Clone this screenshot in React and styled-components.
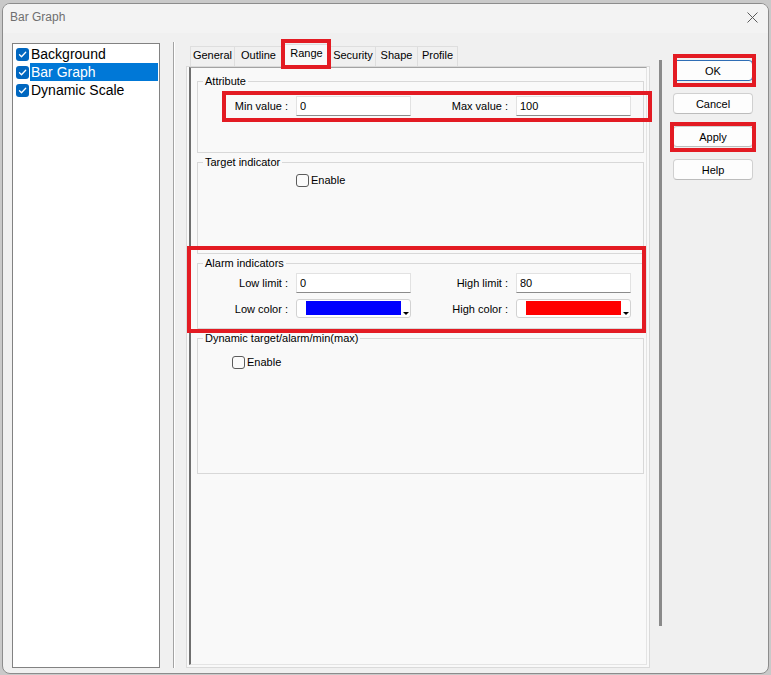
import React from "react";
import styled, { createGlobalStyle } from "styled-components";

const GlobalStyle = createGlobalStyle`
  html, body {
    margin: 0;
    padding: 0;
    background: #c9c9c9;
  }
  body {
    font-family: "Liberation Sans", Arial, sans-serif;
    color: #000;
  }
`;

const RED = "#e31b23";

const Dialog = styled.div`
  width: 767px;
  height: 671px;
  box-sizing: border-box;
  margin: 3px 0 0 2px;
  border: 1px solid #8c8c8c;
  border-radius: 8px;
  background: #f0f0f0;
  display: flex;
  flex-direction: column;
  overflow: hidden;
`;

const TitleBar = styled.div`
  height: 29px;
  flex: none;
  display: flex;
  align-items: flex-start;
  justify-content: space-between;
  padding: 6px 10px 0 7px;
  box-sizing: border-box;
  background: #f3f3f3;
`;

const Title = styled.span`
  font-size: 12px;
  line-height: 14px;
  color: #6f6f6f;
`;

const CloseIcon = styled.svg`
  width: 11px;
  height: 11px;
  margin-top: 2px;
`;

const Body = styled.div`
  flex: 1;
  display: flex;
  align-items: flex-start;
  padding: 10px 0 0 9px;
`;

/* object tree on the left */
const Tree = styled.div`
  width: 148px;
  height: 625px;
  box-sizing: border-box;
  border: 1px solid #828282;
  background: #fff;
  padding-top: 1px;
`;

const TreeItem = styled.div`
  display: flex;
  align-items: center;
  height: 18px;
`;

const TreeCheck = styled.span`
  width: 13px;
  height: 13px;
  margin: 0 1px 0 3px;
  border-radius: 3px;
  background: #0067c0;
  display: flex;
  align-items: center;
  justify-content: center;
  flex: none;
`;

const TreeLabel = styled.span`
  flex: 1;
  margin-right: 1px;
  padding-left: 1px;
  font-size: 14px;
  line-height: 18px;
  color: ${(p) => (p.$selected ? "#fff" : "#000")};
  background: ${(p) => (p.$selected ? "#0078d7" : "transparent")};
`;

const Divider = styled.div`
  width: 1px;
  height: 626px;
  margin: -1px 0 0 13px;
  background: #a3a3a3;
  box-shadow: 1px 0 0 #fff;
`;

/* property sheet */
const TabArea = styled.div`
  width: 464px;
  height: 624px;
  margin: 1px 0 0 12px;
  display: flex;
  flex-direction: column;
`;

const TabStrip = styled.div`
  height: 22px;
  flex: none;
  display: flex;
  align-items: flex-end;
  padding-left: 4px;
`;

const Tab = styled.div`
  position: relative;
  width: ${(p) => p.$w}px;
  height: ${(p) => (p.$active ? 23 : 20)}px;
  margin: 0 -1px ${(p) => (p.$active ? -1 : 0)}px 0;
  box-sizing: border-box;
  border: 1px solid #dedede;
  border-bottom: none;
  background: ${(p) => (p.$active ? "#f9f9f9" : "#f0f0f0")};
  z-index: ${(p) => (p.$active ? 2 : 1)};
  display: flex;
  align-items: center;
  justify-content: center;
  padding-bottom: ${(p) => (p.$active ? 5 : 3)}px;
  font-size: 11px;
  line-height: 13px;
`;

const TabPanel = styled.div`
  flex: 1;
  display: flex;
  border: 1px solid #dadada;
  background: #f9f9f9;
  padding: 0 2px 2px 2px;
`;

const ContentBox = styled.div`
  flex: 1;
  display: flex;
  flex-direction: column;
  gap: 2px;
  border-left: 2px solid #6f6f6f;
  border-top: 1px solid #a3a3a3;
  border-right: 1px solid #e4e4e4;
  border-bottom: 1px solid #e4e4e4;
  padding: 6px 2px 0 6px;
  background: #f9f9f9;
`;

const Group = styled.fieldset`
  margin: 0;
  min-width: 0;
  box-sizing: border-box;
  height: ${(p) => p.$h}px;
  border: 1px solid #d8d8d8;
  padding: ${(p) => p.$pt}px 0 0 0;
`;

const Caption = styled.legend`
  margin-left: 5px;
  padding: 0 2px;
  font-size: 11px;
  line-height: 14px;
`;

const FieldGrid = styled.div`
  display: grid;
  grid-template-columns: 90px 115px 89px 115px;
  column-gap: 8px;
  row-gap: 6px;
  align-items: center;
`;

const FieldLabel = styled.span`
  text-align: right;
  font-size: 11px;
  white-space: nowrap;
`;

const TextBox = styled.input`
  width: 115px;
  height: 20px;
  box-sizing: border-box;
  margin: 0;
  border: 1px solid #e2e2e2;
  border-bottom-color: #8b8b8b;
  background: #fff;
  padding: 0 0 0 3px;
  font-family: "Liberation Sans", Arial, sans-serif;
  font-size: 11px;
  color: #000;
  outline: none;
`;

const ColorBox = styled.div`
  width: 115px;
  height: 19px;
  box-sizing: border-box;
  display: flex;
  border: 1px solid #d2d2d2;
  border-radius: 3px;
  background: #fff;
  padding: 1px 0 2px 9px;
`;

const Swatch = styled.div`
  flex: 1;
  background: ${(p) => p.$color};
`;

const DropMark = styled.div`
  width: 9px;
  display: flex;
  align-items: flex-end;
  justify-content: center;

  &::before {
    content: "";
    border-left: 3px solid transparent;
    border-right: 3px solid transparent;
    border-top: 3px solid #000;
  }
`;

const CheckRow = styled.label`
  display: flex;
  align-items: center;
  gap: 2px;
  padding-left: ${(p) => p.$indent}px;
  font-size: 11px;
  line-height: 15px;
`;

const Box = styled.span`
  width: 13px;
  height: 13px;
  box-sizing: border-box;
  border: 1px solid #5c5c5c;
  border-radius: 3px;
  background: #fbfbfb;
`;

const ScrollLine = styled.div`
  width: 3px;
  height: 566px;
  margin: 17px 0 0 9px;
  background: #8a8a8a;
`;

const Buttons = styled.div`
  width: 80px;
  margin: 17px 0 0 11px;
  display: flex;
  flex-direction: column;
  gap: 12px;
`;

const Button = styled.button`
  width: 80px;
  height: 21px;
  box-sizing: border-box;
  margin: 0;
  padding: 0;
  border: 1px solid ${(p) => (p.$default ? "#2f6db5" : "#d0d0d0")};
  border-bottom-color: ${(p) => (p.$default ? "#2f6db5" : "#bcbcbc")};
  border-radius: 4px;
  background: #fdfdfd;
  font-family: "Liberation Sans", Arial, sans-serif;
  font-size: 11px;
  color: #000;
`;

/* red callout frame drawn over a control */
const Marked = styled.div`
  position: relative;

  &::after {
    content: "";
    position: absolute;
    top: ${(p) => p.$t}px;
    right: ${(p) => p.$r}px;
    bottom: ${(p) => p.$b}px;
    left: ${(p) => p.$l}px;
    border: 4px solid ${RED};
    pointer-events: none;
    z-index: 5;
  }
`;

const tree = [
  { name: "Background" },
  { name: "Bar Graph", selected: true },
  { name: "Dynamic Scale" },
];

const tabs = [
  { name: "General", w: 45 },
  { name: "Outline", w: 49 },
  { name: "Range", w: 49, active: true },
  { name: "Security", w: 46 },
  { name: "Shape", w: 43 },
  { name: "Profile", w: 41 },
];

const Check = () => (
  <svg width="9" height="9" viewBox="0 0 9 9">
    <path d="M1.5 4.8l2 2L7.7 2.3" fill="none" stroke="#fff" strokeWidth="1.3" strokeLinecap="round" strokeLinejoin="round" />
  </svg>
);

export default function App() {
  return (
    <>
      <GlobalStyle />
      <Dialog>
        <TitleBar>
          <Title>Bar Graph</Title>
          <CloseIcon viewBox="0 0 11 11">
            <path d="M0.5 0.5L10.5 10.5M10.5 0.5L0.5 10.5" stroke="#5a5a5a" strokeWidth="1" />
          </CloseIcon>
        </TitleBar>

        <Body>
          <Tree>
            {tree.map((t) => (
              <TreeItem key={t.name}>
                <TreeCheck>
                  <Check />
                </TreeCheck>
                <TreeLabel $selected={t.selected}>{t.name}</TreeLabel>
              </TreeItem>
            ))}
          </Tree>

          <Divider />

          <TabArea>
            <TabStrip>
              {tabs.map((t) =>
                t.active ? (
                  <Marked key={t.name} $t={-5} $r={-1} $b={-3} $l={-1}>
                    <Tab $w={t.w} $active>
                      {t.name}
                    </Tab>
                  </Marked>
                ) : (
                  <Tab key={t.name} $w={t.w}>
                    {t.name}
                  </Tab>
                )
              )}
            </TabStrip>

            <TabPanel>
              <ContentBox>
                <Group $h={79} $pt={8}>
                  <Caption>Attribute</Caption>
                  <Marked $t={-5} $r={-9} $b={-6} $l={24}>
                    <FieldGrid>
                      <FieldLabel>Min value :</FieldLabel>
                      <TextBox readOnly value="0" />
                      <FieldLabel>Max value :</FieldLabel>
                      <TextBox readOnly value="100" />
                    </FieldGrid>
                  </Marked>
                </Group>

                <Group $h={99} $pt={4}>
                  <Caption>Target indicator</Caption>
                  <CheckRow $indent={98}>
                    <Box />
                    Enable
                  </CheckRow>
                </Group>

                <Marked $t={-10} $r={-2} $b={-4} $l={-10}>
                  <Group $h={73} $pt={3}>
                    <Caption>Alarm indicators</Caption>
                    <FieldGrid>
                      <FieldLabel>Low limit :</FieldLabel>
                      <TextBox readOnly value="0" />
                      <FieldLabel>High limit :</FieldLabel>
                      <TextBox readOnly value="80" />
                      <FieldLabel>Low color :</FieldLabel>
                      <ColorBox>
                        <Swatch $color="#0000ff" />
                        <DropMark />
                      </ColorBox>
                      <FieldLabel>High color :</FieldLabel>
                      <ColorBox>
                        <Swatch $color="#ff0000" />
                        <DropMark />
                      </ColorBox>
                    </FieldGrid>
                  </Group>
                </Marked>

                <Group $h={143} $pt={10}>
                  <Caption>Dynamic target/alarm/min(max)</Caption>
                  <CheckRow $indent={34}>
                    <Box />
                    Enable
                  </CheckRow>
                </Group>
              </ContentBox>
            </TabPanel>
          </TabArea>

          <ScrollLine />

          <Buttons>
            <Marked $t={-6} $r={-3} $b={-6} $l={0}>
              <Button $default>OK</Button>
            </Marked>
            <Button>Cancel</Button>
            <Marked $t={-4} $r={-3} $b={-5} $l={-3}>
              <Button>Apply</Button>
            </Marked>
            <Button>Help</Button>
          </Buttons>
        </Body>
      </Dialog>
    </>
  );
}
